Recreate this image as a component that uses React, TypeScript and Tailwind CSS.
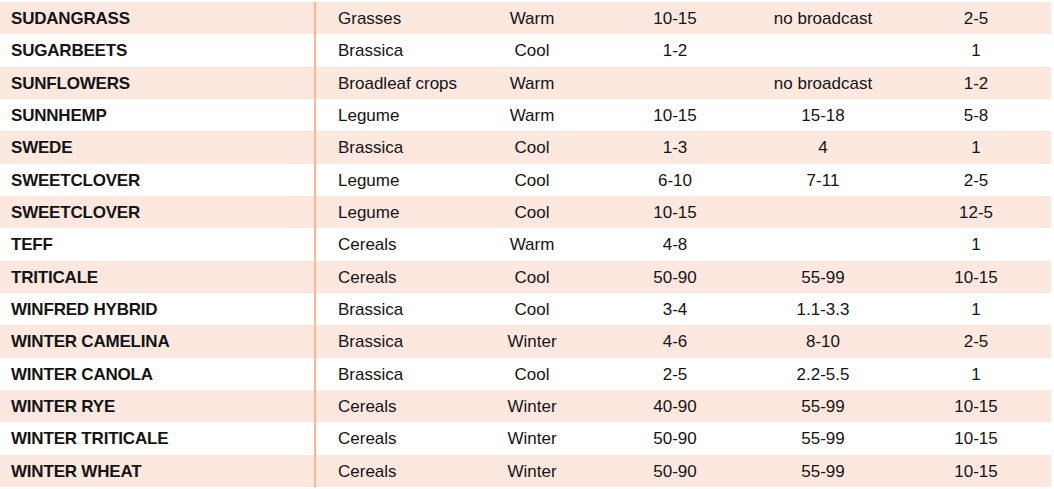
import React from "react";

const rows: [string, string, string, string, string, string][] = [
  ["SUDANGRASS", "Grasses", "Warm", "10-15", "no broadcast", "2-5"],
  ["SUGARBEETS", "Brassica", "Cool", "1-2", "", "1"],
  ["SUNFLOWERS", "Broadleaf crops", "Warm", "", "no broadcast", "1-2"],
  ["SUNNHEMP", "Legume", "Warm", "10-15", "15-18", "5-8"],
  ["SWEDE", "Brassica", "Cool", "1-3", "4", "1"],
  ["SWEETCLOVER", "Legume", "Cool", "6-10", "7-11", "2-5"],
  ["SWEETCLOVER", "Legume", "Cool", "10-15", "", "12-5"],
  ["TEFF", "Cereals", "Warm", "4-8", "", "1"],
  ["TRITICALE", "Cereals", "Cool", "50-90", "55-99", "10-15"],
  ["WINFRED HYBRID", "Brassica", "Cool", "3-4", "1.1-3.3", "1"],
  ["WINTER CAMELINA", "Brassica", "Winter", "4-6", "8-10", "2-5"],
  ["WINTER CANOLA", "Brassica", "Cool", "2-5", "2.2-5.5", "1"],
  ["WINTER RYE", "Cereals", "Winter", "40-90", "55-99", "10-15"],
  ["WINTER TRITICALE", "Cereals", "Winter", "50-90", "55-99", "10-15"],
  ["WINTER WHEAT", "Cereals", "Winter", "50-90", "55-99", "10-15"],
];

export default function App() {
  return (
    <div
      className="w-[1054px] h-[489px] bg-white pt-[2px] text-[17px] leading-none text-[#141414] whitespace-nowrap"
      style={{ fontFamily: '"Liberation Sans", Arial, sans-serif' }}
    >
      <div className="w-[1051px] h-[485px] grid grid-rows-[repeat(15,minmax(0,1fr))]">
        {rows.map((r, i) => (
          <div
            key={i}
            className={`flex items-stretch ${i % 2 === 0 ? "bg-[#fde8e0]" : "bg-white"}`}
          >
            <div className="w-[314px] pl-[11px] pt-[1px] flex items-center font-bold tracking-[-0.2px]">
              {r[0]}
            </div>
            <div className="w-[2px] bg-[#fbb88f]" />
            <div className="w-[140px] pl-[22px] pt-[1px] flex items-center">{r[1]}</div>
            <div className="w-[152px] pt-[1px] flex items-center justify-center">{r[2]}</div>
            <div className="w-[134px] pt-[1px] flex items-center justify-center">{r[3]}</div>
            <div className="w-[162px] pt-[1px] flex items-center justify-center">{r[4]}</div>
            <div className="w-[144px] pt-[1px] flex items-center justify-center">{r[5]}</div>
            <div className="flex-1" />
          </div>
        ))}
      </div>
    </div>
  );
}
